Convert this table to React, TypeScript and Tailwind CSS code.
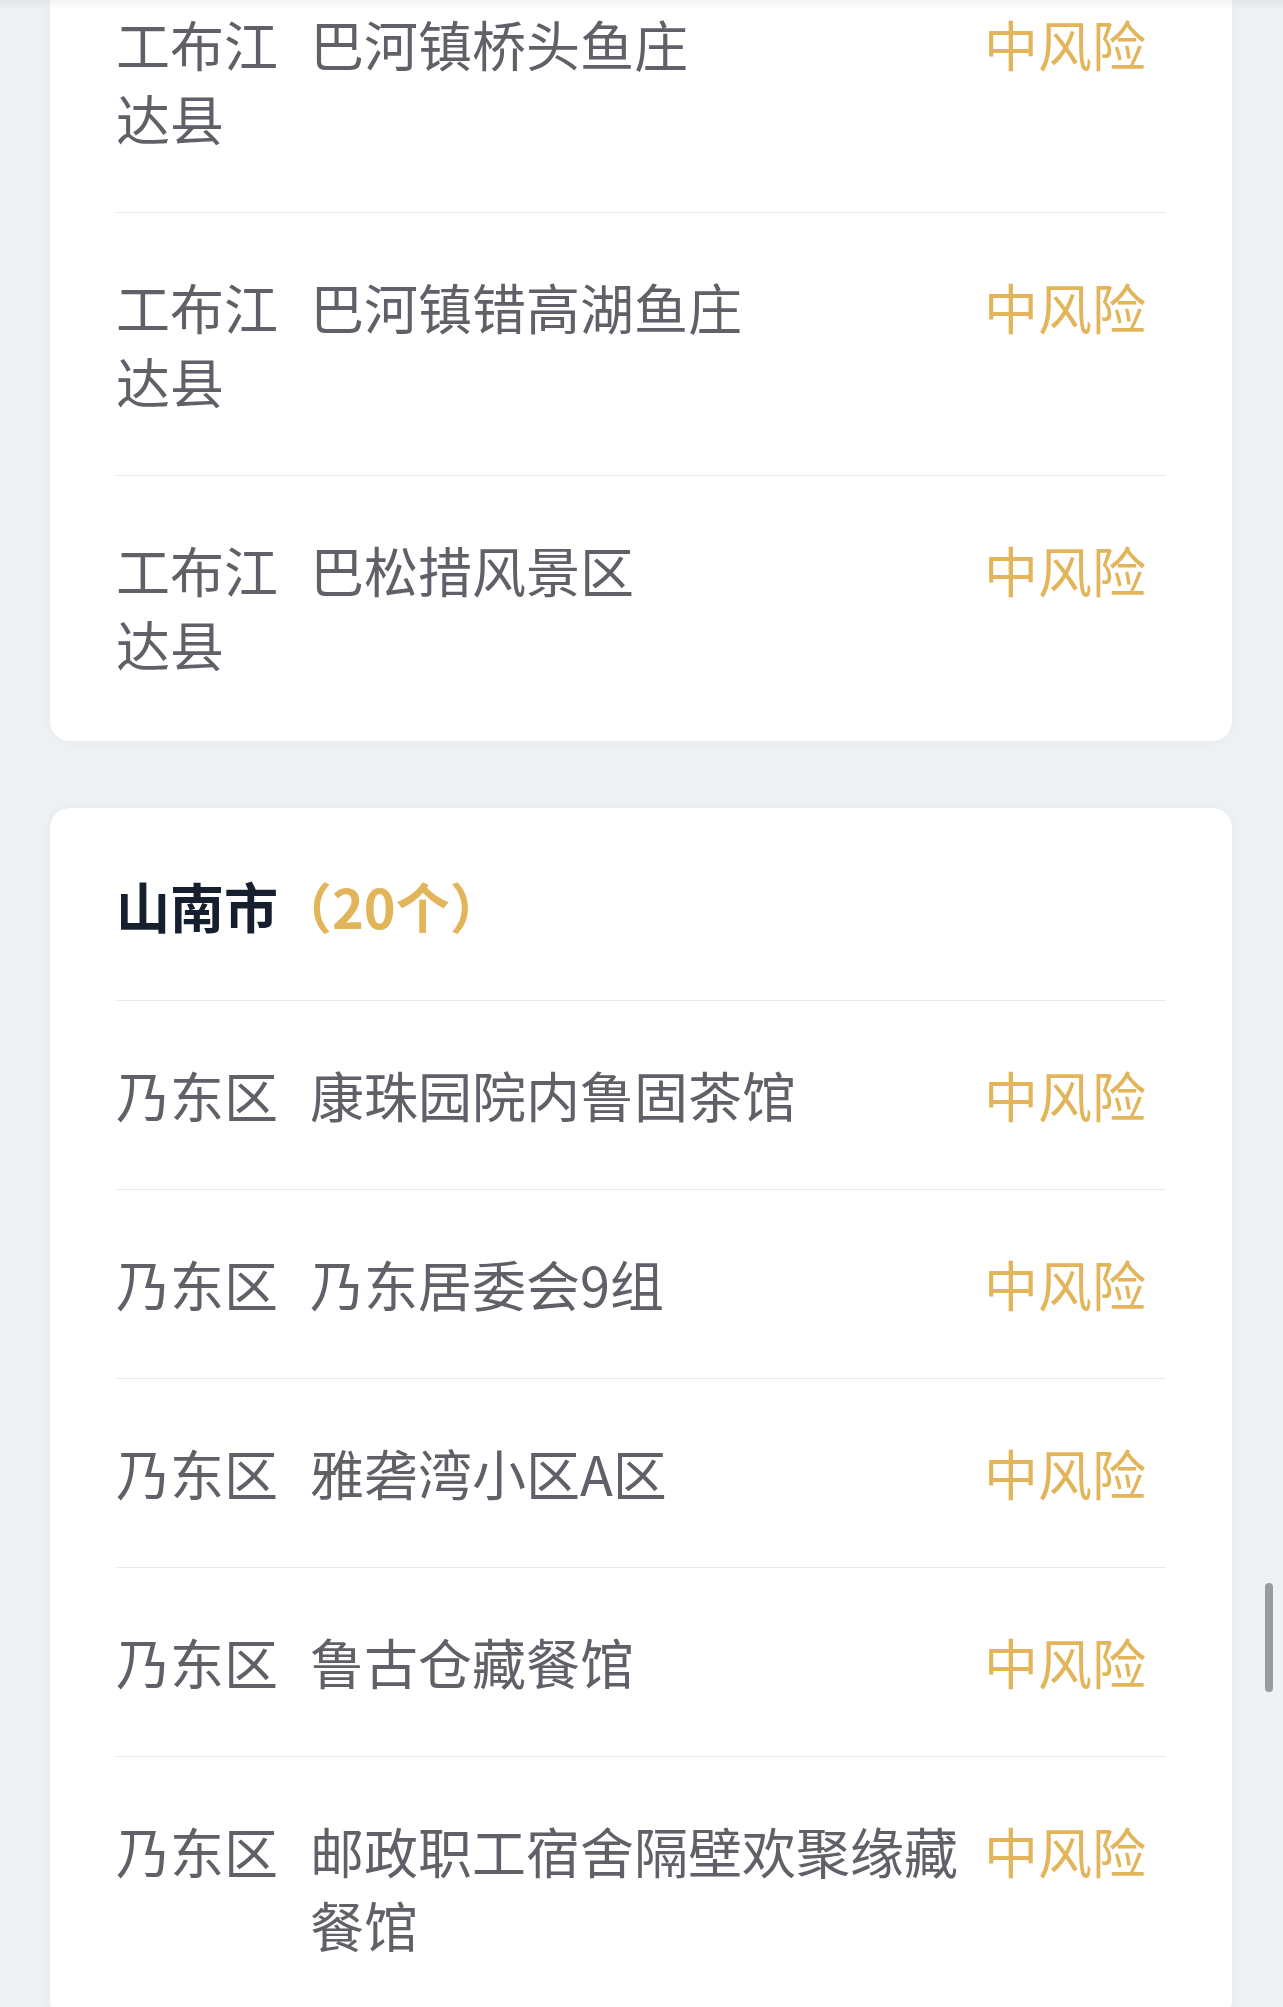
import React from "react";

type Row = { district: string; name: string; risk: string };

const card1: Row[] = [
  { district: "工布江达县", name: "巴河镇桥头鱼庄", risk: "中风险" },
  { district: "工布江达县", name: "巴河镇错高湖鱼庄", risk: "中风险" },
  { district: "工布江达县", name: "巴松措风景区", risk: "中风险" },
];

const card2: Row[] = [
  { district: "乃东区", name: "康珠园院内鲁固茶馆", risk: "中风险" },
  { district: "乃东区", name: "乃东居委会9组", risk: "中风险" },
  { district: "乃东区", name: "雅砻湾小区A区", risk: "中风险" },
  { district: "乃东区", name: "鲁古仓藏餐馆", risk: "中风险" },
  { district: "乃东区", name: "邮政职工宿舍隔壁欢聚缘藏餐馆", risk: "中风险" },
];

function ItemRow({ row, last, topPad }: { row: Row; last?: boolean; topPad?: string }) {
  return (
    <div
      className={
        "flex items-start pb-[57px] " +
        (topPad ? topPad : "pt-[57px]") +
        (last ? "" : " border-b border-[#e9e9eb]")
      }
    >
      <div className="w-[163px] shrink-0 text-[#606168]">{row.district}</div>
      <div className="ml-[31px] min-w-0 flex-1 text-[#606168]">{row.name}</div>
      <div className="ml-[20px] mr-[20px] shrink-0 whitespace-nowrap text-[#e3b55a]">{row.risk}</div>
    </div>
  );
}

export default function App() {
  return (
    <div
      className="relative h-[2007px] w-full overflow-hidden bg-[#eff2f5] text-[54px] leading-[74px]"
      style={{ fontFamily: '"Noto Sans CJK SC", "Noto Sans", sans-serif' }}
    >
      <div className="pl-[50px] pr-[51px]">
        {/* Card 1 (scrolled, top off-screen) */}
        <div className="rounded-b-[20px] bg-white px-[66px] pb-[3px] shadow-[0_0_20px_rgba(0,0,0,0.04)]">
          {card1.map((r, i) => (
            <ItemRow
              key={i}
              row={r}
              last={i === card1.length - 1}
              topPad={i === 0 ? "pt-[7px]" : undefined}
            />
          ))}
        </div>

        {/* Card 2 */}
        <div className="mt-[67px] rounded-[20px] bg-white px-[66px] shadow-[0_0_20px_rgba(0,0,0,0.04)]">
          <div className="border-b border-[#e9e9eb] pt-[61px] pb-[57px] font-bold text-[#161f2d]">
            山南市<span className="text-[#e3b55a]">（20个）</span>
          </div>
          {card2.map((r, i) => (
            <ItemRow key={i} row={r} last={false} />
          ))}
        </div>
      </div>

      {/* top shadow from fixed header */}
      <div className="pointer-events-none absolute left-0 top-0 h-[10px] w-full bg-linear-to-b from-[rgba(0,0,0,0.05)] to-transparent" />

      {/* overlay scrollbar */}
      <div className="pointer-events-none absolute left-[1265px] top-[1583px] h-[109px] w-[8px] rounded-full bg-[#9b9b9b]" />
    </div>
  );
}
